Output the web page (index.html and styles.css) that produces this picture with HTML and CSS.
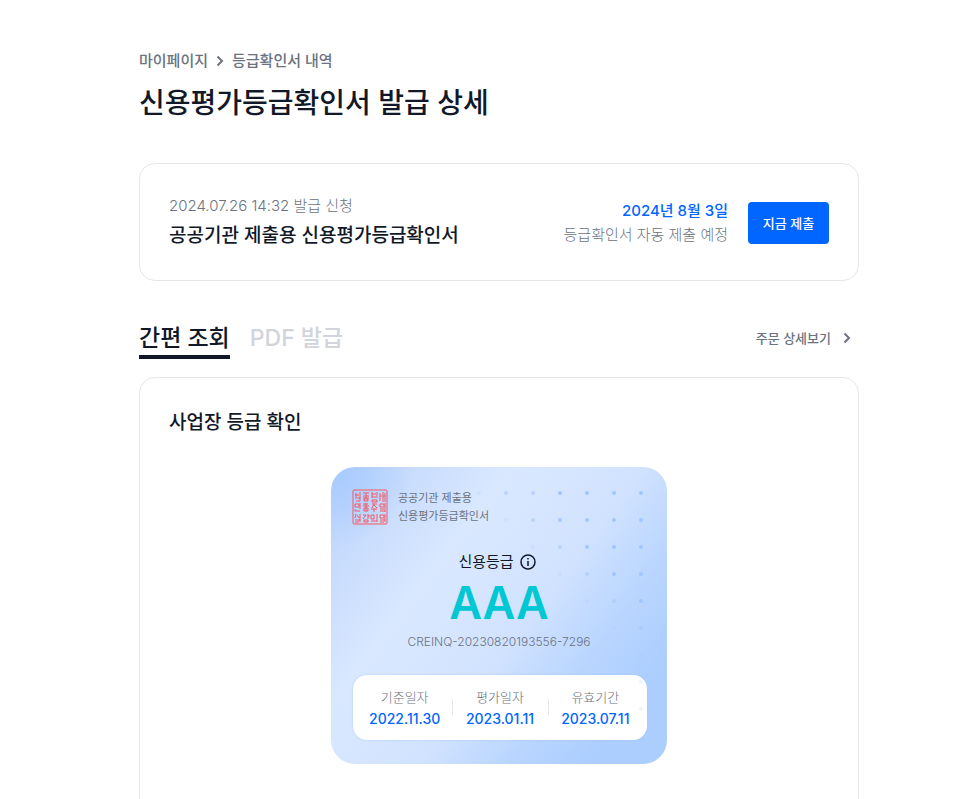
FILE: index.html
```
<!DOCTYPE html>
<html lang="ko">
<head>
    <meta charset="UTF-8">
    <meta name="viewport" content="width=device-width, initial-scale=1.0">
    <title>신용평가등급확인서 발급 상세</title>
    <link rel="stylesheet" href="styles.css">
</head>
<body>
    <main class="container">
        <nav class="breadcrumb">
            <a href="#">마이페이지</a>
            <svg class="chevron" viewBox="0 0 8 12"><path d="M1.5 1.5 6 6 1.5 10.5"/></svg>
            <a href="#">등급확인서 내역</a>
        </nav>
        <h1>신용평가등급확인서 발급 상세</h1>

        <section class="card order">
            <div class="order-info">
                <p class="order-date">2024.07.26 14:32 발급 신청</p>
                <h2>공공기관 제출용 신용평가등급확인서</h2>
            </div>
            <div class="order-submit">
                <p class="submit-date">2024년 8월 3일</p>
                <p class="submit-text">등급확인서 자동 제출 예정</p>
            </div>
            <button class="submit-btn" type="button">지금 제출</button>
        </section>

        <div class="tabs">
            <button class="tab active" type="button">간편 조회</button>
            <button class="tab" type="button">PDF 발급</button>
            <a class="detail-link" href="#">주문 상세보기
                <svg class="chevron" viewBox="0 0 8 12"><path d="M1.5 1.5 6 6 1.5 10.5"/></svg>
            </a>
        </div>

        <section class="card grade">
            <h2>사업장 등급 확인</h2>
            <div class="certificate">
                <div class="cert-head">
                    <svg class="seal" viewBox="0 0 36 36">
                        <rect x="1" y="1" width="34" height="34" rx="1"/>
                        <path d="M4 4v6M3 6h4M8 3v9M5 9h3M4 12h4M11 4h6M11 7h6M14 4v5M11 9h6M12 12h4v-2h-4zM20 3v6M20 5h4M20 8h4M25 3v6M20 11h5v2h-5zM28 4v8M28 7h2M31 3v10M31 7h2M33 4v9"/>
                        <path d="M3 15h4v3H3zM8 14v6M3 20v2h5M11 15h5M11 17h6M12 19h4v3h-4zM14 14v8M20 15h5M22 15l-2 4M22 16l3 3M19 20h6M22 20v3M28 15h4v3h-4zM33 14v9M28 20h4M28 22h5"/>
                        <path d="M4 25l-1 4M5 26l2 3M8 25v8M3 31h5M3 33h4M11 26h3l-3 4M16 25v5M16 27h2M12 31h4v2h-4zM19 26h3v4h-3zM25 25v8M19 32h6M28 26h4v3h-4zM33 25v8M28 31h5M28 33h4"/>
                    </svg>
                    <p>공공기관 제출용<br>신용평가등급확인서</p>
                </div>
                <div class="cert-label">
                    신용등급
                    <svg class="info" viewBox="0 0 16 16"><circle cx="8" cy="8" r="7"/><path d="M8 7v5M8 4v1.5"/></svg>
                </div>
                <strong class="cert-grade">AAA</strong>
                <p class="cert-no">CREINQ-20230820193556-7296</p>
                <dl class="cert-dates">
                    <div><dt>기준일자</dt><dd>2022.11.30</dd></div>
                    <div><dt>평가일자</dt><dd>2023.01.11</dd></div>
                    <div><dt>유효기간</dt><dd>2023.07.11</dd></div>
                </dl>
                <svg class="dots" viewBox="0 0 190 240">
                    <g opacity=".2"><circle cx="13" cy="16" r="2"/><circle cx="40" cy="43" r="2"/><circle cx="67" cy="70" r="2"/><circle cx="94" cy="97" r="2"/><circle cx="121" cy="124" r="2"/><circle cx="148" cy="151" r="2"/><circle cx="175" cy="178" r="2"/><circle cx="175" cy="205" r="2"/><circle cx="175" cy="232" r="2"/></g>
                    <g opacity=".55"><circle cx="40" cy="16" r="2"/><circle cx="67" cy="16" r="2"/><circle cx="67" cy="43" r="2"/><circle cx="94" cy="70" r="2"/><circle cx="121" cy="97" r="2"/><circle cx="148" cy="124" r="2"/><circle cx="175" cy="151" r="2"/></g>
                    <circle cx="94" cy="16" r="2"/><circle cx="121" cy="16" r="2"/><circle cx="148" cy="16" r="2"/><circle cx="175" cy="16" r="2"/>
                    <circle cx="94" cy="43" r="2"/><circle cx="121" cy="43" r="2"/><circle cx="148" cy="43" r="2"/><circle cx="175" cy="43" r="2"/>
                    <circle cx="121" cy="70" r="2"/><circle cx="148" cy="70" r="2"/><circle cx="175" cy="70" r="2"/>
                    <circle cx="148" cy="97" r="2"/><circle cx="175" cy="97" r="2"/><circle cx="175" cy="124" r="2"/>
                </svg>
            </div>
        </section>
    </main>
</body>
</html>
```
FILE: styles.css
```
* {
    box-sizing: border-box;
    margin: 0;
    padding: 0;
}

body {
    background: #fff;
    color: #111827;
    font-family: Inter, "Noto Sans CJK KR", sans-serif;
}

a {
    color: inherit;
    text-decoration: none;
}

button {
    border: 0;
    background: none;
    font-family: inherit;
    cursor: pointer;
}

.container {
    max-width: 957px;
    padding: 49px 98px 0 139px;
}

.breadcrumb {
    display: flex;
    align-items: center;
    gap: 8px;
    color: #6b7280;
    font-size: 15px;
    font-weight: 500;
    line-height: 24px;
}

.chevron {
    width: 8px;
    height: 12px;
    fill: none;
    stroke: #6b7280;
    stroke-width: 2;
}

h1 {
    margin-top: 8px;
    font-size: 28px;
    font-weight: 500;
    line-height: 44px;
}

h2 {
    font-size: 19px;
    font-weight: 500;
    line-height: 32px;
}

.card {
    border: 1px solid #e5e7eb;
    border-radius: 16px;
    padding: 29px;
}

.order {
    display: flex;
    align-items: center;
    margin-top: 38px;
    padding: 30px 29px 28px;
    color: #6b7280;
    font-size: 15px;
    line-height: 24px;
}

.order-info {
    flex: 1;
}

.order-date {
    padding-bottom: 2px;
    font-weight: 300;
}

.order h2 {
    color: #111827;
}

.order-submit {
    margin-right: 20px;
    text-align: right;
}

.submit-date {
    color: #0066ff;
    font-weight: 500;
}

.submit-text {
    font-weight: 300;
}

.submit-btn {
    width: 81px;
    height: 42px;
    padding-bottom: 2px;
    border-radius: 4px;
    background: #0066ff;
    color: #fff;
    font-size: 13px;
    font-weight: 500;
}

.tabs {
    display: flex;
    align-items: center;
    gap: 20px;
    margin-top: 35px;
}

.tab {
    height: 43px;
    padding-top: 5px;
    border-bottom: 4px solid transparent;
    color: #d1d5db;
    font-size: 23px;
    font-weight: 500;
    line-height: 34px;
}

.tab.active {
    border-color: #111827;
    color: #111827;
}

.detail-link {
    display: flex;
    align-items: center;
    gap: 12px;
    margin-left: auto;
    padding-right: 8px;
    color: #6b7280;
    font-size: 13px;
    font-weight: 500;
}

.grade {
    margin-top: 18px;
    padding-bottom: 60px;
}

.certificate {
    position: relative;
    width: 336px;
    margin: 28px auto 0;
    padding: 22px 20px 24px;
    border-radius: 24px;
    background:
        radial-gradient(circle at 0 0, #a6caff 0, rgba(166, 202, 255, 0) 80px),
        linear-gradient(127deg, #b9d3fc 0%, #cbdefd 18%, #d9e8ff 32%, #d5e5ff 46%, #d0e2ff 56%, #b9d5ff 72%, #abceff 86%, #abceff 100%);
    text-align: center;
}

.cert-head {
    display: flex;
    align-items: center;
    gap: 10px;
    padding-left: 1px;
    color: #6b7280;
    font-size: 11px;
    line-height: 18px;
    text-align: left;
}

.seal {
    width: 36px;
    height: 36px;
    fill: none;
    stroke: #f55862;
}

.cert-label {
    display: flex;
    align-items: center;
    justify-content: center;
    gap: 6px;
    margin-top: 25px;
    padding-right: 4px;
    font-size: 15px;
    line-height: 24px;
}

.info {
    width: 16px;
    height: 16px;
    fill: none;
    stroke: #111827;
    stroke-width: 1.5;
}

.cert-grade {
    display: block;
    color: #00c7d4;
    font-size: 45px;
    font-weight: 600;
    line-height: 57px;
}

.cert-no {
    color: #6b7280;
    font-size: 12px;
    font-weight: 300;
    line-height: 22px;
}

.cert-dates {
    display: flex;
    margin: 22px 0 0 2px;
    padding: 12px 4px 11px;
    border-radius: 14px;
    background: #fff;
    box-shadow: 0 0 2px #9fc6ff;
    line-height: 21px;
}

.cert-dates div {
    position: relative;
    flex: 1;
}

.cert-dates div + div::before {
    content: "";
    position: absolute;
    left: 0;
    top: 12px;
    height: 16px;
    border-left: 1px solid #e5e7eb;
}

.cert-dates dt {
    color: #6b7280;
    font-size: 13px;
    font-weight: 300;
}

.cert-dates dd {
    color: #0066ff;
    font-size: 14px;
    font-weight: 500;
}

.dots {
    position: absolute;
    top: 10px;
    right: 11px;
    width: 190px;
    height: 240px;
    fill: #a0c6ff;
    pointer-events: none;
}
```
